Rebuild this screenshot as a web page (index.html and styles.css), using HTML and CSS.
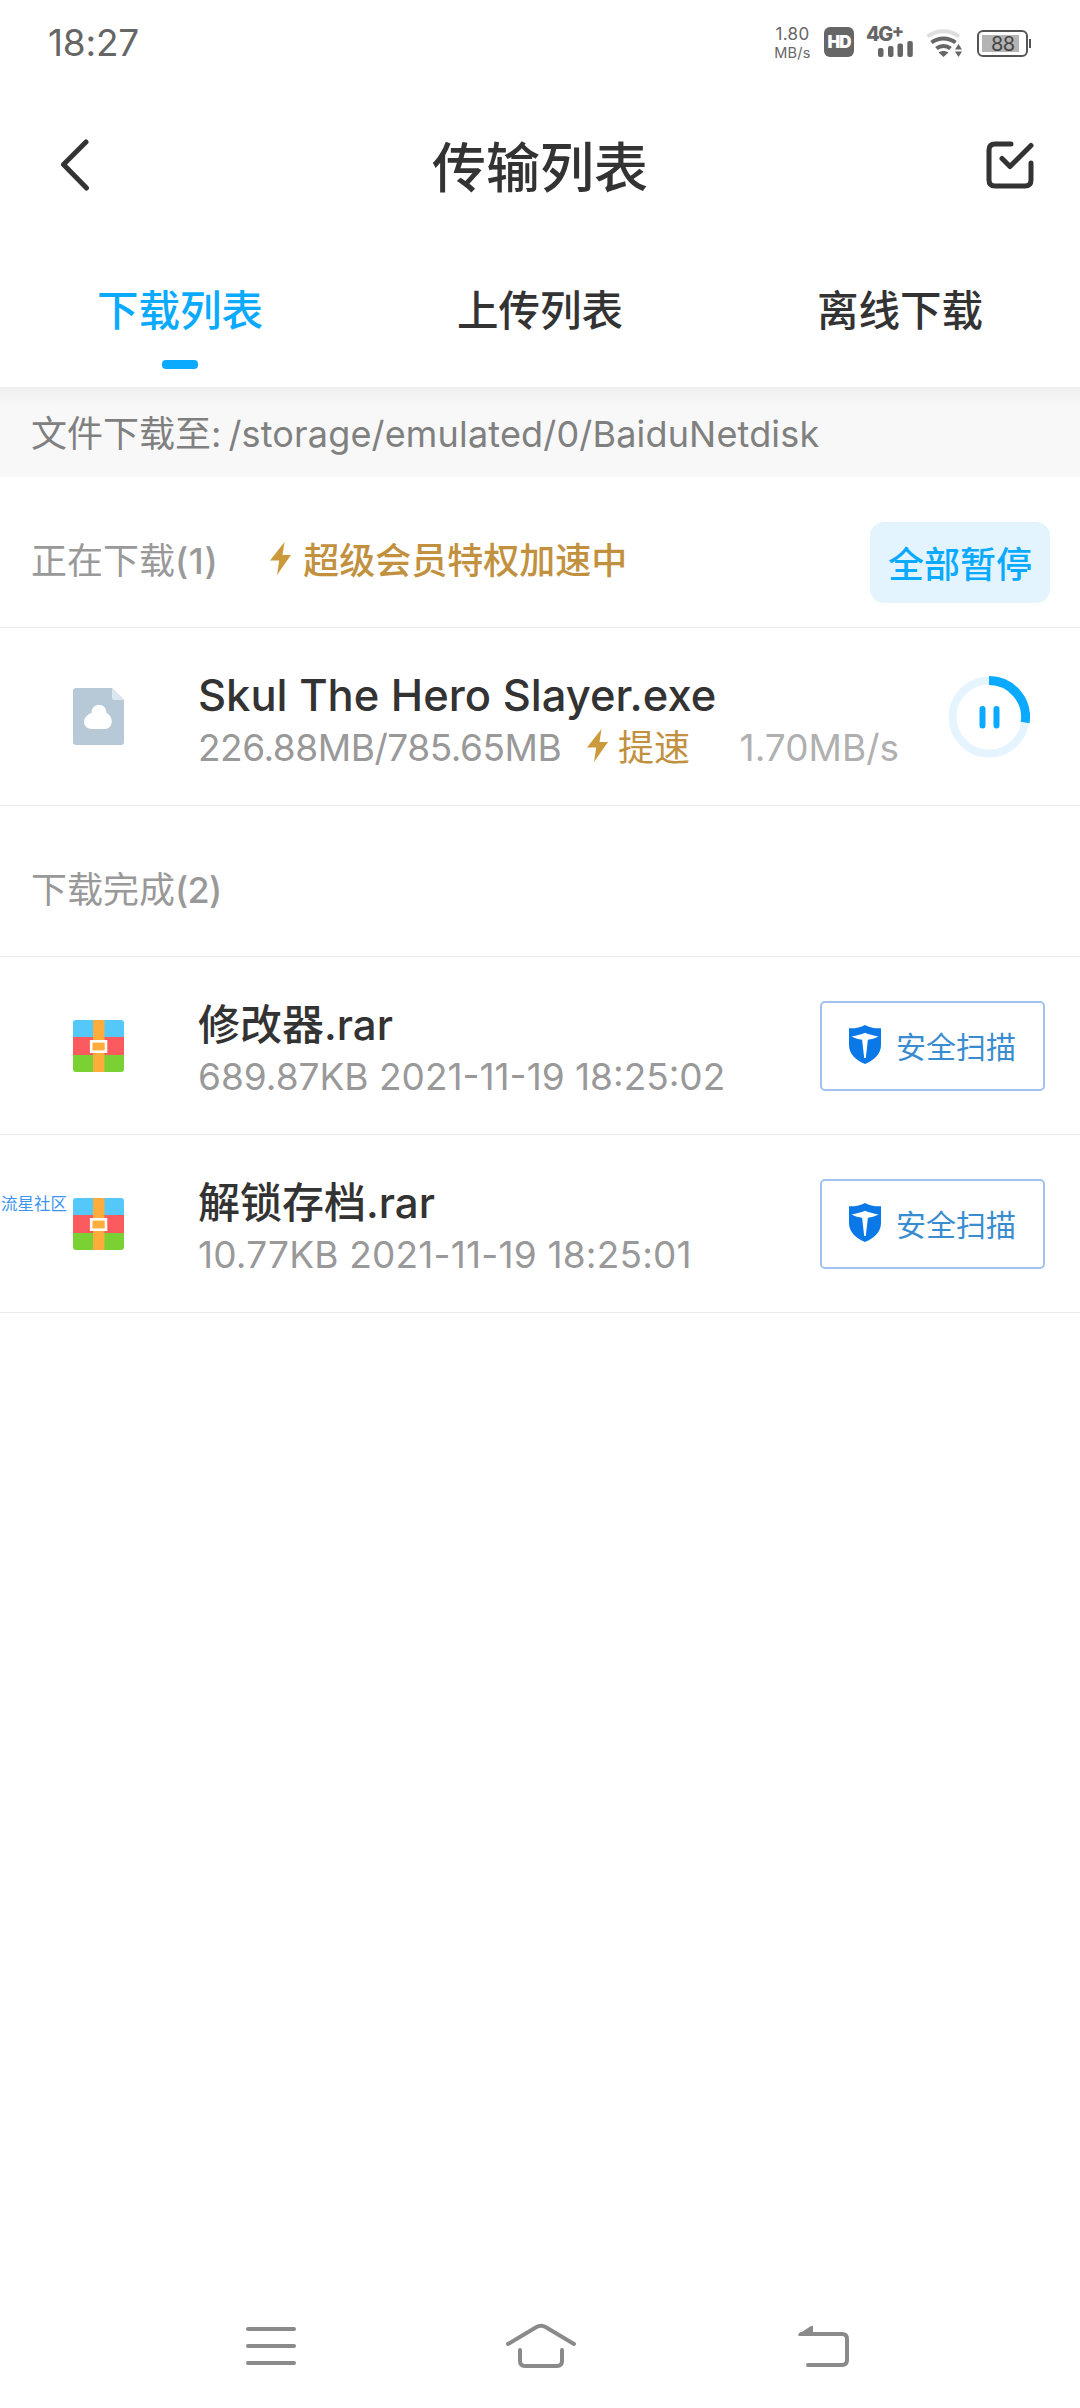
FILE: index.html
```html
<!DOCTYPE html>
<html lang="zh-CN">
<head>
<meta charset="utf-8">
<title>传输列表</title>
<link rel="stylesheet" href="styles.css">
</head>
<body>
<svg class="defs" width="0" height="0" aria-hidden="true">
  <symbol id="bolt" viewBox="0 0 21 33"><path d="M14.500 0 0 18.500h9.200L7 33 21 13h-8.500z"/></symbol>
  <symbol id="rar" viewBox="0 0 51 52">
    <clipPath id="rar-clip"><rect width="51" height="52" rx="3"/></clipPath>
    <g clip-path="url(#rar-clip)">
      <rect width="51" height="18" fill="#55c8fa"/>
      <rect y="17" width="51" height="19" fill="#fb5b5f"/>
      <rect y="35" width="51" height="17" fill="#7bd133"/>
      <rect x="20" width="11.500" height="52" fill="#feac3c"/>
    </g>
    <rect x="18.200" y="21.300" width="14.800" height="10.400" fill="#feac3c" stroke="#fff" stroke-width="2.600"/>
  </symbol>
  <symbol id="shield" viewBox="0 0 32 39">
    <path fill="#0a78e6" d="M16 0c4.500 2.600 9.500 3.500 16 3.300V20c0 9-7 15.500-16 19C7 35.500 0 29 0 20V3.300C6.500 3.500 11.500 2.600 16 0z"/>
    <path fill="#fff" d="M2.500 11.500C8 10.500 12 9.500 16 7.800c4 1.700 8 2.700 13.500 3.700-4 2-7 2.800-10.600 3.200L16.800 33h-1.600l-2.100-18.300C9.500 14.300 6.500 13.500 2.500 11.500z"/>
  </symbol>
</svg>

<div class="screen">
  <div class="status">
    <span class="clock">18:27</span>
    <div class="status-right">
      <div class="net-speed"><span class="net-value">1.80</span><span class="net-unit">MB/s</span></div>
      <span class="hd">HD</span>
      <div class="signal">
        <span class="signal-label">4G<sup>+</sup></span>
        <svg class="signal-bars" width="35" height="16" viewBox="0 0 35 16"><rect y="7" width="5.500" height="9" rx="2"/><rect x="10" y="5" width="5.500" height="11" rx="2"/><rect x="19.500" y="2.500" width="5.500" height="13.500" rx="2"/><rect x="29.300" width="5.500" height="16" rx="2"/></svg>
      </div>
      <svg class="wifi" width="37" height="28" viewBox="0 0 37 28" fill="none" stroke-width="4">
        <path stroke="#dedede" d="M1.500 7.500C11 .5 24 .5 33 7.500"/>
        <path stroke="#666" d="M5.500 13.500c7-5.500 17-5.500 24 0M10.500 19.500c4-3.500 10-3.500 14 0"/>
        <path fill="#666" d="M12.500 23.500c3-2 7-2 10 0l-5 4.500zM29 20.500h7L32.500 15zM29 22.500h7L32.500 28z"/>
      </svg>
      <div class="battery"><span class="battery-level">88</span></div>
    </div>
  </div>

  <header class="header">
    <svg width="30" height="52" viewBox="0 0 30 52"><path class="line-dark" d="M26 3 3.500 25.500 26.500 49"/></svg>
    <h1 class="title">传输列表</h1>
    <svg width="48" height="48" viewBox="0 0 48 48"><path class="line-dark" d="M25 3H9q-6 0-6 6v30q0 6 6 6h30q6 0 6-6V22M16 17.500l8 8L45 4.500"/></svg>
  </header>

  <nav class="tabs">
    <span class="tab tab-active">下载列表</span>
    <span class="tab">上传列表</span>
    <span class="tab">离线下载</span>
  </nav>

  <div class="path-bar">文件下载至:<span class="path">/storage/emulated/0/BaiduNetdisk</span></div>

  <main>
    <section>
      <div class="section-head">
        <span class="section-name">正在下载<span class="count">(1)</span></span>
        <div class="boost"><svg class="bolt" width="21" height="33"><use href="#bolt"/></svg><span>超级会员特权加速中</span></div>
        <button class="pause-all">全部暂停</button>
      </div>
      <div class="row">
        <svg class="file-icon" width="51" height="57" viewBox="0 0 51 57">
          <path fill="#b7c8d6" d="M3 0h36l12 12v42q0 3-3 3H3q-3 0-3-3V3q0-3 3-3z"/>
          <path fill="#dce6ee" d="M39 0l12 12H41q-2 0-2-2z"/>
          <path fill="#fff" d="M18.500 25c0-11 15-11 15 0 8 4 6.500 16-1.500 16H19c-9.500 0-11.500-12-.5-16z"/>
        </svg>
        <div class="info">
          <div class="name name-latin">Skul The Hero Slayer.exe</div>
          <div class="meta"><span class="size">226.88MB/785.65MB</span><svg class="bolt" width="21" height="33"><use href="#bolt"/></svg><span class="boost-link">提速</span><span class="speed">1.70MB/s</span></div>
        </div>
        <svg class="progress" width="82" height="82" viewBox="0 0 82 82" fill="none">
          <circle cx="41" cy="41" r="36.500" stroke="#e5f4fe" stroke-width="8"/>
          <path d="M41 4.500A36.500 36.500 0 0 1 77.100 46.500" stroke="#09aaff" stroke-width="9"/>
          <path d="M34.500 33v16.500M48.500 33v16.500" stroke="#09aaff" stroke-width="6" stroke-linecap="round"/>
        </svg>
      </div>
    </section>

    <section>
      <div class="section-head">
        <span class="section-name">下载完成<span class="count count-done">(2)</span></span>
      </div>
      <div class="row">
        <svg class="file-icon" width="51" height="52"><use href="#rar"/></svg>
        <div class="info">
          <div class="name">修改器.rar</div>
          <div class="meta">689.87KB 2021-11-19 18:25:02</div>
        </div>
        <button class="scan"><svg width="32" height="39"><use href="#shield"/></svg>安全扫描</button>
      </div>
      <div class="row">
        <span class="watermark">流星社区</span>
        <svg class="file-icon" width="51" height="52"><use href="#rar"/></svg>
        <div class="info">
          <div class="name">解锁存档.rar</div>
          <div class="meta meta-loose">10.77KB 2021-11-19 18:25:01</div>
        </div>
        <button class="scan"><svg width="32" height="39"><use href="#shield"/></svg>安全扫描</button>
      </div>
    </section>
  </main>

  <footer class="sysnav">
    <svg width="50" height="40" viewBox="0 0 50 40"><path class="line-nav" d="M2 3h46M2 20h46M2 37h46"/></svg>
    <svg class="nav-home" width="72" height="46" viewBox="0 0 72 46"><path class="line-nav" d="M3 21 31.500 4Q36 1.500 40.500 4L69 21M15 27v11q0 5 5 5h32q5 0 5-5V27"/></svg>
    <svg width="52" height="44" viewBox="0 0 52 44"><path class="line-nav" d="M3 10h41q5 0 5 5v21q0 5-5 5H10"/><path fill="#8a8a8a" d="M0 10.500 13 2q2-1 2 1v9H2q-2 0-2-1.500z"/></svg>
  </footer>
</div>
</body>
</html>
```
FILE: styles.css
```css
* { box-sizing: border-box; }
body {
  margin: 0;
  background: #fff;
  font-family: Inter, "Noto Sans CJK SC", sans-serif;
  color: #333;
}
svg { display: block; flex: none; }
button { font: inherit; padding: 0; margin: 0; border: 0; background: none; }
.defs { position: absolute; }

.screen {
  width: 1080px;
  height: 2408px;
  display: flex;
  flex-direction: column;
  white-space: nowrap;
  overflow: hidden;
}
.line-dark { fill: none; stroke: #333; stroke-width: 5; stroke-linecap: round; stroke-linejoin: round; }
.line-nav { fill: none; stroke: #8a8a8a; stroke-width: 4; stroke-linecap: round; }

.status {
  height: 84px;
  padding: 0 48px;
  display: flex;
  justify-content: space-between;
  color: #666;
}
.clock { font-size: 37px; line-height: 85px; letter-spacing: -0.200px; }
.status-right { display: flex; align-items: flex-start; padding-top: 27px; }
.net-speed { width: 37px; margin: -3px 1px 0 -1px; display: flex; flex-direction: column; align-items: center; }
.net-value { font-size: 17px; line-height: 20px; letter-spacing: 0.300px; }
.net-unit { font-size: 14.500px; line-height: 17px; letter-spacing: 0.300px; }
.hd {
  width: 30px; height: 30px; margin-left: 12px;
  border-radius: 6px; background: #666; color: #fff;
  font-size: 17px; line-height: 30px; font-weight: 900; text-align: center; letter-spacing: -1px;
}
.signal { width: 48px; margin-left: 12px; }
.signal-label { display: block; height: 14px; font-size: 20px; line-height: 15px; font-weight: 800; letter-spacing: -1.500px; }
.signal-label sup { font-size: 18px; line-height: 0; vertical-align: 4px; }
.signal-bars { margin-left: 12px; fill: #666; }
.wifi { margin: 2px 0 0 12px; }
.battery {
  position: relative;
  width: 51px; height: 27px; margin: 3px 4px 0 14px; padding: 3px;
  border: 2px solid #555; border-radius: 6px;
}
.battery::after {
  content: ""; position: absolute; right: -5px; top: 7px;
  width: 2px; height: 9px; background: #555;
}
.battery-level {
  display: block; width: 37px; height: 17px; padding-left: 9px;
  background: #b4b4b4; color: #444; font-size: 20px; line-height: 18px;
  letter-spacing: -0.500px;
}

.header {
  height: 167px;
  padding: 0 46px 6px 60px;
  display: flex;
  align-items: center;
  justify-content: space-between;
}
.title { margin: 8px 0 0 4px; font-size: 54px; line-height: 60px; font-weight: 500; }

.tabs { height: 136px; display: grid; grid-template-columns: repeat(3, 1fr); }
.tab {
  display: flex; flex-direction: column; align-items: center;
  padding-top: 30px; font-size: 41.500px; line-height: 60px; font-weight: 500;
}
.tab-active { color: #09aaff; }
.tab-active::after {
  content: ""; width: 36px; height: 9px; margin-top: 19px;
  border-radius: 4px; background: #09aaff;
}

.path-bar {
  height: 90px;
  padding-left: 31px;
  display: flex;
  background: linear-gradient(#efefef, #f8f8f8 20px);
  color: #808080;
  font-size: 36px;
  line-height: 94px;
}
.path { margin-left: 7px; letter-spacing: 0.170px; }

.section-head {
  height: 151px;
  padding: 17px 30px 0 31px;
  display: flex;
  align-items: center;
  border-bottom: 1px solid #ebebeb;
}
.section-name { color: #999; font-size: 36px; line-height: 50px; }
.count { font-weight: 500; letter-spacing: 0.500px; }
.count-done { letter-spacing: -0.700px; }
.bolt { fill: #cc9a3c; }
.boost {
  display: flex; align-items: center; gap: 12px; margin-left: 52px;
  color: #c29140; font-size: 36px; line-height: 50px; font-weight: 500;
}
.boost .bolt { margin-top: -4px; }
.pause-all {
  width: 180px; height: 81px; margin: 3px 0 0 auto;
  border-radius: 14px; background: #e3f4fe; color: #09aaff;
  font-size: 36px; font-weight: 500;
}

.row {
  position: relative;
  height: 178px;
  display: flex;
  align-items: center;
  padding: 0 35px 0 73px;
  border-bottom: 1px solid #ebebeb;
}
.info { flex: 1; margin-left: 74px; height: 105px; padding-top: 5px; }
.name { font-size: 42px; line-height: 53px; font-weight: 500; }
.name-latin { font-size: 43.500px; }
.meta { display: flex; align-items: center; color: #999; font-size: 37px; line-height: 52px; }
.meta-loose { letter-spacing: 0.200px; }
.meta .bolt { margin: -5px 10px 0 27px; }
.size { width: 362px; letter-spacing: -0.450px; }
.boost-link { color: #c29140; font-size: 36px; }
.speed { margin: 0 49px 0 auto; color: #b0b0b0; }
.progress { margin-right: 15px; }
.scan {
  width: 225px; height: 90px;
  display: flex; align-items: center; gap: 15px; padding: 0 0 2px 27px;
  border: 2px solid #9fc3ee; border-radius: 5px;
  color: #3a8cd0; font-size: 30px;
}
.watermark {
  position: absolute; left: 1px; top: 58px;
  color: #3c96f0; font-size: 16.500px; line-height: 22px;
}

.sysnav {
  height: 118px; margin-top: auto; padding: 0 230px 7px 246px;
  display: flex; align-items: center; justify-content: space-between;
}
.nav-home { margin-right: 12px; }
```
